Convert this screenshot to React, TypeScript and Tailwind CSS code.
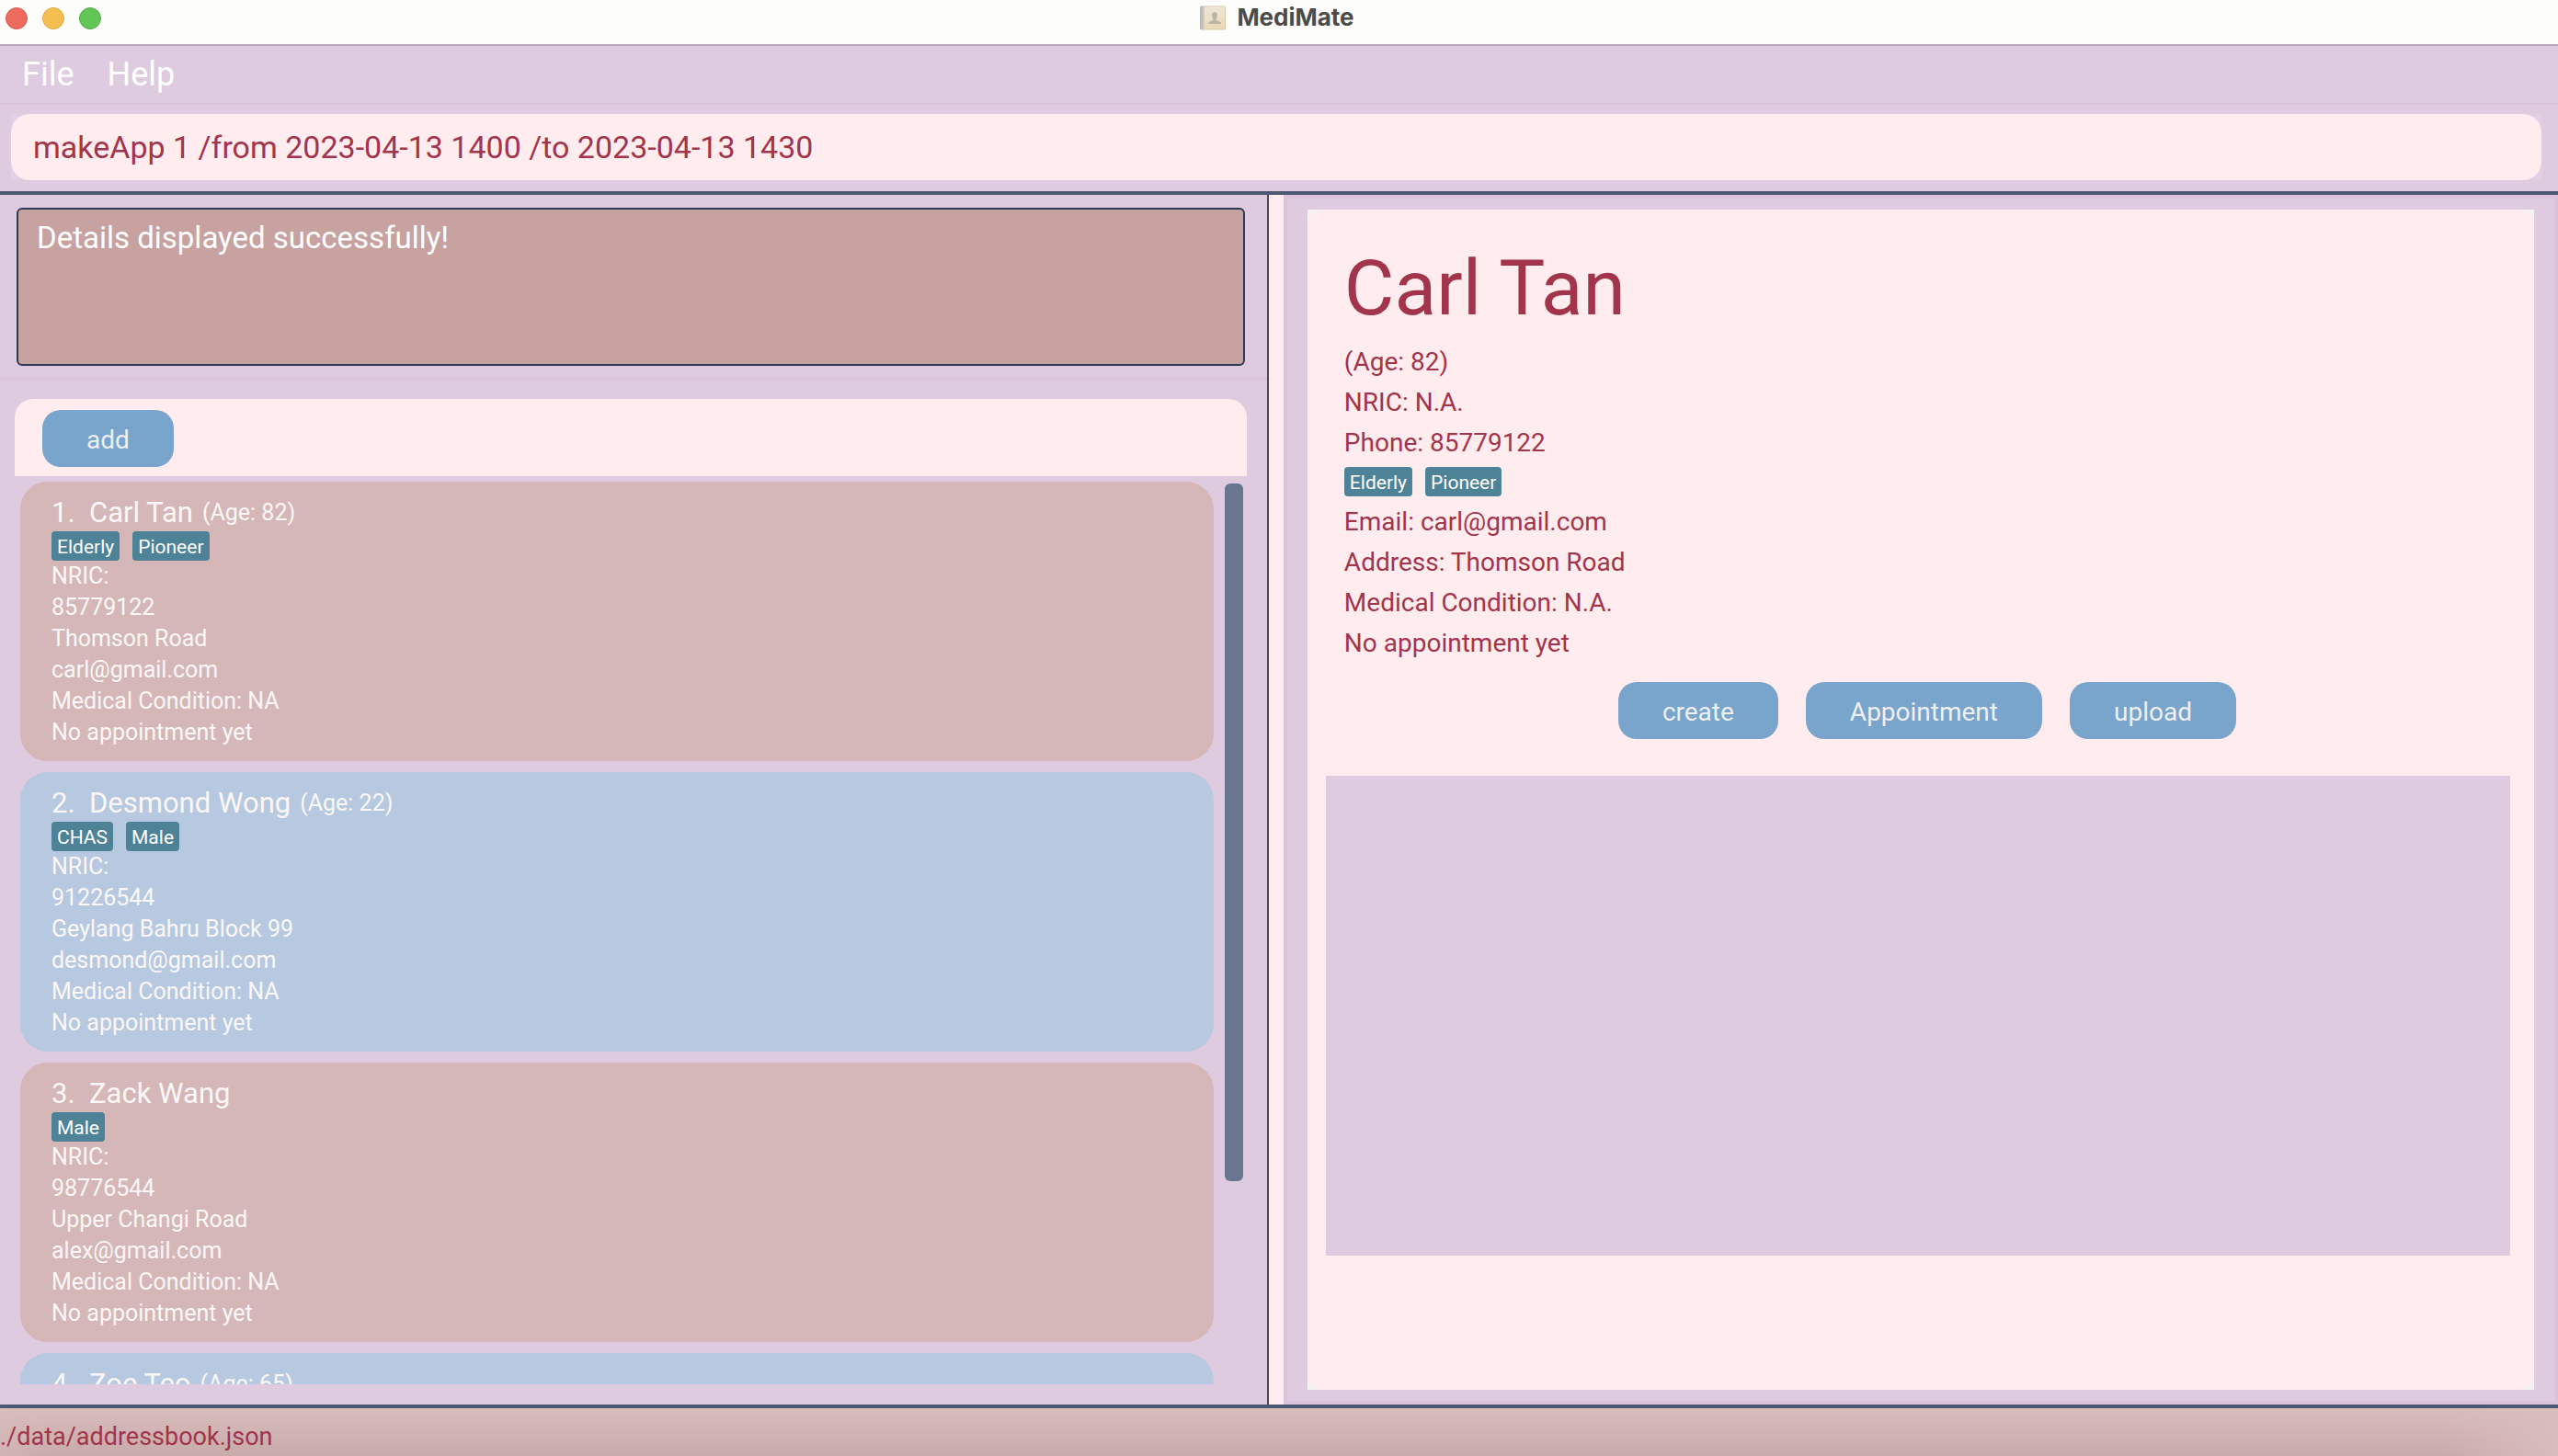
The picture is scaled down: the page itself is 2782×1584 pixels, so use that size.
type Patient = {
  name: string;
  age?: number;
  tags: string[];
  lines: string[];
};

const patients: Patient[] = [
  {
    name: "Carl Tan",
    age: 82,
    tags: ["Elderly", "Pioneer"],
    lines: ["NRIC:", "85779122", "Thomson Road", "carl@gmail.com", "Medical Condition: NA", "No appointment yet"],
  },
  {
    name: "Desmond Wong",
    age: 22,
    tags: ["CHAS", "Male"],
    lines: ["NRIC:", "91226544", "Geylang Bahru Block 99", "desmond@gmail.com", "Medical Condition: NA", "No appointment yet"],
  },
  {
    name: "Zack Wang",
    tags: ["Male"],
    lines: ["NRIC:", "98776544", "Upper Changi Road", "alex@gmail.com", "Medical Condition: NA", "No appointment yet"],
  },
  { name: "Zoe Teo", age: 65, tags: [], lines: [] },
];

function BookIcon() {
  return (
    <svg width="28" height="27" viewBox="0 0 28 27" aria-hidden="true">
      <defs>
        <linearGradient id="cover" x1="0" y1="0" x2="0" y2="1">
          <stop offset="0" stopColor="#efe6d6" />
          <stop offset="1" stopColor="#ead9b4" />
        </linearGradient>
      </defs>
      <rect x="0" y="0.5" width="28" height="26" rx="1.5" fill="#d9c9ab" />
      <rect x="1" y="0.5" width="26" height="2" fill="#e6dccb" />
      <rect x="4" y="2" width="23" height="23.5" fill="url(#cover)" />
      <rect x="0" y="1" width="5" height="25" rx="1" fill="#bdbab7" />
      <rect x="3" y="2" width="2" height="24" fill="#cfcac3" />
      <path
        d="M16 7.2c1.9 0 3 1.4 3 3.4 0 1.700-.6 2.700-1.300 3.500v1.400c0 .7.8 1 2.300 1.500 1.900.6 3 1.200 3.100 3H9c.1-1.800 1.200-2.400 3.100-3 1.500-.5 2.300-.8 2.300-1.500v-1.400c-.8-.8-1.400-1.800-1.400-3.500 0-2 1.100-3.400 3-3.400z"
        fill="#bbb5a9"
      />
    </svg>
  );
}

function Tags({ items }: { items: string[] }) {
  return (
    <ul className="flex gap-3.5">
      {items.map((tag) => (
        <li key={tag} className="h-8 rounded bg-[#4d8297] px-1.5 text-[21px] leading-[34px] text-white">
          {tag}
        </li>
      ))}
    </ul>
  );
}

function ActionButton({ label }: { label: string }) {
  return (
    <button type="button" className="rounded-[20px] bg-[#79a5cc] px-12 pt-3.5 pb-2.5 text-[28px] leading-[38px] text-[#efefef]">
      {label}
    </button>
  );
}

function PatientCard({ patient, index }: { patient: Patient; index: number }) {
  return (
    <li
      className={`min-h-[304px] shrink-0 rounded-[30px] px-[34px] pt-3.5 pb-3.5 text-[25px] leading-[34px] text-[#fbf7f6] ${
        index % 2 === 0 ? "bg-[#d5b7b8]" : "bg-[#b7c9e1]"
      }`}
    >
      <div className="flex h-10 items-center">
        <h2 className="text-[31px] leading-10 whitespace-pre">{`${index + 1}.  ${patient.name}`}</h2>
        {patient.age !== undefined && <span className="ml-2.5">(Age: {patient.age})</span>}
      </div>
      <Tags items={patient.tags} />
      {patient.lines.map((line) => (
        <p key={line}>{line}</p>
      ))}
    </li>
  );
}

export default function App() {
  return (
    <div className="flex h-screen flex-col overflow-hidden bg-[#decbdf] font-[Roboto,'Liberation_Sans',sans-serif]">
      <header className="flex h-[50px] shrink-0 items-start border-b-2 border-[#baa7be] bg-[#fcfcfa]">
        <div className="flex flex-1 gap-4 pt-2 pl-1.5">
          <button type="button" aria-label="Close" className="size-6 rounded-full border border-[#d9594f] bg-[#ed6a5f]" />
          <button type="button" aria-label="Minimize" className="size-6 rounded-full border border-[#dfa841] bg-[#f5bf50]" />
          <button type="button" aria-label="Zoom" className="size-6 rounded-full border border-[#54ab43] bg-[#62c655]" />
        </div>
        <div className="flex items-center gap-3 pt-1 pr-2.5">
          <BookIcon />
          <h1 className="font-[Inter,sans-serif] text-[26px] leading-[30px] font-bold text-[#4b4b49]">MediMate</h1>
        </div>
        <div className="flex-1" />
      </header>

      <nav className="flex h-16 shrink-0 items-center gap-9 border-b-2 border-[#dbc3dc] px-6 text-[36px] leading-[62px] text-white">
        <button type="button">File</button>
        <button type="button">Help</button>
      </nav>

      <div className="shrink-0 border-b-4 border-[#4d5973] py-2.5 pr-[18px] pb-3 pl-3">
        <div className="bg-[#e1cfe3]">
          <input
            aria-label="Command"
            defaultValue="makeApp 1 /from 2023-04-13 1400 /to 2023-04-13 1430"
            className="block h-[72px] w-full rounded-[20px] bg-[#feecee] px-6 text-[34px] text-[#a2344c] outline-none"
          />
        </div>
      </div>

      <main className="flex min-h-0 flex-1">
        <section className="flex basis-[49.6%] flex-col border-r-2 border-[#4d4a4d]">
          <div className="shrink-0 border-b-4 border-[#dbc3dc] pt-3.5 pr-6 pb-3 pl-[18px]">
            <textarea
              aria-label="Result"
              readOnly
              defaultValue="Details displayed successfully!"
              className="block h-[172px] w-full resize-none rounded-md border-2 border-[#2d3a54] bg-[#c8a2a1] px-5 py-2.5 text-[33px] leading-[42px] text-white outline-none"
            />
          </div>
          <div className="mt-5 mr-[22px] ml-4 flex shrink-0 rounded-t-[20px] bg-[#feecee] px-[30px] pt-3 pb-2.5">
            <ActionButton label="add" />
          </div>
          <div className="mb-[22px] flex min-h-0 flex-1 gap-3 pr-[26px] pl-[22px]">
            <ol className="flex min-h-0 flex-1 flex-col gap-3 overflow-hidden pt-1.5">
              {patients.map((patient, index) => (
                <PatientCard key={patient.name} patient={patient} index={index} />
              ))}
            </ol>
            <div className="w-5 pt-2">
              <div className="h-[77.4%] rounded-md bg-[#687690]" />
            </div>
          </div>
        </section>

        <section className="flex min-w-0 flex-1 flex-col border-l-16 border-[#feecee]">
          <div className="flex flex-1 flex-col border-4 border-[#dbc3dc] px-[22px] py-3">
            <div className="flex flex-1 flex-col bg-[#f3f3f3]">
              <article className="flex-1 rounded-[16px] bg-[#feecee] pt-9 pr-[26px] pl-5 text-[28px] leading-[44px] text-[#a2344c]">
                <div className="pl-5">
                  <h2 className="text-[84px] leading-[100px]">Carl Tan</h2>
                  <p className="pt-2">(Age: 82)</p>
                  <p>NRIC: N.A.</p>
                  <p>Phone: 85779122</p>
                  <div className="pt-1 pb-1.5">
                    <Tags items={["Elderly", "Pioneer"]} />
                  </div>
                  <p>Email: carl@gmail.com</p>
                  <p>Address: Thomson Road</p>
                  <p>Medical Condition: N.A.</p>
                  <p>No appointment yet</p>
                  <div className="mt-5 flex justify-center gap-[30px]">
                    <ActionButton label="create" />
                    <ActionButton label="Appointment" />
                    <ActionButton label="upload" />
                  </div>
                </div>
                <div className="mt-10 h-[522px] bg-[#decbdf]" />
              </article>
            </div>
          </div>
        </section>
      </main>

      <footer className="h-14 shrink-0 border-t-4 border-[#4d5973] bg-linear-to-b from-[#d9bcbc] to-[#c7aaa9] text-[#a2344c]">
        <p className="h-full bg-[linear-gradient(to_right,#d9bcbc80_0,#d9bcbc00_60px,#d9bcbc00_calc(100%_-_130px),#d9bcbc_100%)] text-[27px] leading-[62px]">
          ./data/addressbook.json
        </p>
      </footer>
    </div>
  );
}
